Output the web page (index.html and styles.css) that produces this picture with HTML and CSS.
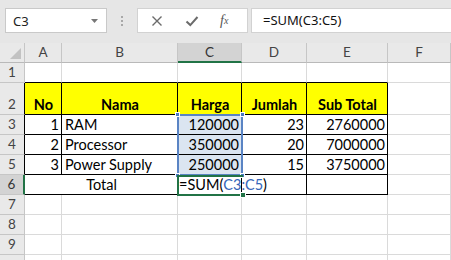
FILE: index.html
```html
<!DOCTYPE html>
<html lang="id">
<head>
  <meta charset="UTF-8" />
  <title>Excel - SUM</title>
  <link rel="stylesheet" href="styles.css">
</head>
<body>
  <div class="topbar">
    <div class="namebox">
      <span>C3</span>
      <svg class="caret" width="7" height="4" viewBox="0 0 7 4"><path d="M0 0h7L3.5 4z" fill="#777"/></svg>
    </div>
    <div class="dots"><i></i><i></i><i></i></div>
    <div class="fbtns">
      <svg width="12" height="12" viewBox="0 0 12 12"><path d="M1.5 1.5l9 9M10.5 1.5l-9 9" stroke="#6b6b6b" stroke-width="1.4" fill="none"/></svg>
      <svg width="14" height="12" viewBox="0 0 14 12"><path d="M1.5 6.5l3.8 3.6L12.5 2" stroke="#6b6b6b" stroke-width="2" fill="none"/></svg>
      <span class="fx">f<sub>x</sub></span>
    </div>
    <div class="finput">=SUM(C3:C5)</div>
  </div>

  <div class="sheet">
    <div class="grid">
      <div class="corner"><span class="tri"></span></div>
      <div class="ch">A</div>
      <div class="ch">B</div>
      <div class="ch sel">C</div>
      <div class="ch">D</div>
      <div class="ch">E</div>
      <div class="ch">F</div>

      <div class="rh">1</div>
      <div class="c bb"></div><div class="c bb"></div><div class="c bb"></div><div class="c bb"></div><div class="c bb"></div><div class="c"></div>

      <div class="rh bk">2</div>
      <div class="c t y ctr">No</div>
      <div class="c t y ctr">Nama</div>
      <div class="c t y ctr">Harga</div>
      <div class="c t y ctr">Jumlah</div>
      <div class="c t y ctr">Sub Total</div>
      <div class="c"></div>

      <div class="rh bk">3</div>
      <div class="c t num">1</div>
      <div class="c t">RAM</div>
      <div class="c t num rng">120000</div>
      <div class="c t num">23</div>
      <div class="c t num">2760000</div>
      <div class="c"></div>

      <div class="rh bk">4</div>
      <div class="c t num">2</div>
      <div class="c t">Processor</div>
      <div class="c t num rng">350000</div>
      <div class="c t num">20</div>
      <div class="c t num">7000000</div>
      <div class="c"></div>

      <div class="rh bk">5</div>
      <div class="c t num">3</div>
      <div class="c t">Power Supply</div>
      <div class="c t num rng">250000</div>
      <div class="c t num">15</div>
      <div class="c t num">3750000</div>
      <div class="c"></div>

      <div class="rh act">6</div>
      <div class="c t ctr span2">Total</div>
      <div class="c t edit">=SUM(<span class="ref">C3:C5</span>)</div>
      <div class="c t"></div>
      <div class="c t"></div>
      <div class="c"></div>

      <div class="rh">7</div>
      <div class="c"></div><div class="c"></div><div class="c"></div><div class="c"></div><div class="c"></div><div class="c"></div>
      <div class="rh">8</div>
      <div class="c"></div><div class="c"></div><div class="c"></div><div class="c"></div><div class="c"></div><div class="c"></div>
      <div class="rh">9</div>
      <div class="c"></div><div class="c"></div><div class="c"></div><div class="c"></div><div class="c"></div><div class="c"></div>
      <div class="rh"></div>
      <div class="c"></div><div class="c"></div><div class="c"></div><div class="c"></div><div class="c"></div><div class="c"></div>
    </div>

    <!-- range C3:C5 and active cell C6 drawn over the grid -->
    <div class="range">
      <b class="h tl"></b><b class="h tr"></b><b class="h bl"></b><b class="h br"></b>
    </div>
    <div class="active"><b class="fill"></b></div>
  </div>
</body>
</html>
```

FILE: styles.css
```css
* {
  box-sizing: border-box;
}
body {
  margin: 0;
  width: 451px;
  height: 260px;
  overflow: hidden;
  background: #fff;
  font-family: Lato, "Liberation Sans", sans-serif;
}

/* formula bar */
.topbar {
  display: flex;
  align-items: flex-start;
  height: 43px;
  padding: 8px 0 0 5px;
  background: #e6e6e6;
  font-family: "Noto Sans", "Liberation Sans", sans-serif;
}
.namebox {
  width: 102px;
  height: 25px;
  background: #fff;
  border: 1px solid #c9c9c9;
  display: flex;
  align-items: center;
  justify-content: space-between;
  padding: 0 8px 0 7px;
  font-size: 13px;
  color: #222;
}
.dots {
  width: 30px;
  height: 25px;
  display: flex;
  flex-direction: column;
  align-items: center;
  justify-content: center;
  gap: 2px;
}
.dots i {
  width: 2px;
  height: 2px;
  background: #a8a8a8;
}
.fbtns {
  width: 111px;
  height: 25px;
  background: #fff;
  border: 1px solid #d2d2d2;
  display: flex;
  align-items: center;
  gap: 22px;
  padding-left: 13px;
}
.fx {
  font-family: "Liberation Serif", serif;
  font-style: italic;
  font-size: 14px;
  color: #555;
  margin-left: -1px;
}
.fx sub {
  font-size: 10px;
  vertical-align: 1px;
}
.finput {
  flex: 1;
  height: 25px;
  margin-left: 3px;
  background: #fff;
  border: 1px solid #d2d2d2;
  border-right: none;
  padding-left: 11px;
  font-size: 13px;
  line-height: 23px;
  color: #111;
}

/* sheet */
.sheet {
  position: relative;
}
.grid {
  display: grid;
  grid-template-columns: 25px 37px 116px 64px 65px 81px 1fr;
  grid-template-rows: 20px 20px 32px repeat(8, 20px);
  font-size: 14.5px;
  color: #000;
}
.grid > div {
  border-right: 1px solid #dadada;
  border-bottom: 1px solid #dadada;
  display: flex;
  align-items: flex-end;
  white-space: nowrap;
  line-height: 17px;
  padding: 0 2px 1px 3px;
}
.corner, .ch, .rh {
  background: #e9e9e9;
  color: #444;
  font-size: 13.5px;
}
.grid > .ch {
  justify-content: center;
  align-items: center;
  border-right-color: #c6c6c6;
  border-bottom-color: #b9b9b9;
  padding: 0;
}
.grid > .ch.sel {
  background: #d3d3d3;
  border-bottom: 2px solid #217346;
  color: #333;
}
.grid > .corner {
  position: relative;
  border-right-color: #c6c6c6;
  border-bottom-color: #b9b9b9;
}
.tri {
  position: absolute;
  right: 3px;
  bottom: 3px;
  width: 0;
  height: 0;
  border-left: 11px solid transparent;
  border-bottom: 11px solid #c2c2c2;
}
.grid > .rh {
  justify-content: center;
  border-right-color: #c6c6c6;
  border-bottom-color: #c6c6c6;
  padding: 0 0 1px;
}
.grid > .rh.bk {
  border-right-color: #000;
}
.grid > .rh.act {
  background: #d3d3d3;
  border-right: 2px solid #217346;
  color: #333;
}
.grid > .bb {
  border-bottom-color: #000;
}
.grid > .t {
  border-right-color: #000;
  border-bottom-color: #000;
}
.y {
  background: #ffff00;
  font-weight: bold;
  padding-bottom: 3px;
}
.grid > .ctr {
  justify-content: center;
}
.grid > .num {
  justify-content: flex-end;
  padding-right: 2px;
}
.rng {
  background: #dbe5f1;
}
.span2 {
  grid-column: span 2;
}
.grid > .edit {
  padding-left: 1px;
  overflow: visible;
}
.ref {
  color: #3465b8;
}

/* selection overlays (offsets are relative to the sheet, which starts below the formula bar) */
.range {
  position: absolute;
  left: 177px;
  top: 71px;
  width: 66px;
  height: 62px;
  border: 2px solid #5a84c4;
}
.h {
  position: absolute;
  width: 5px;
  height: 5px;
  background: #4a78c0;
  border: 1px solid #fff;
}
.tl { left: -4px; top: -4px; }
.tr { right: -4px; top: -4px; }
.bl { left: -4px; bottom: -4px; }
.br { right: -4px; bottom: -4px; }
.active {
  position: absolute;
  left: 177px;
  top: 132px;
  width: 66px;
  height: 21px;
  border: 2px solid #217346;
  border-right: none;
}
.fill {
  position: absolute;
  right: -3px;
  bottom: -4px;
  width: 6px;
  height: 6px;
  background: #217346;
  border: 1px solid #fff;
}
```
